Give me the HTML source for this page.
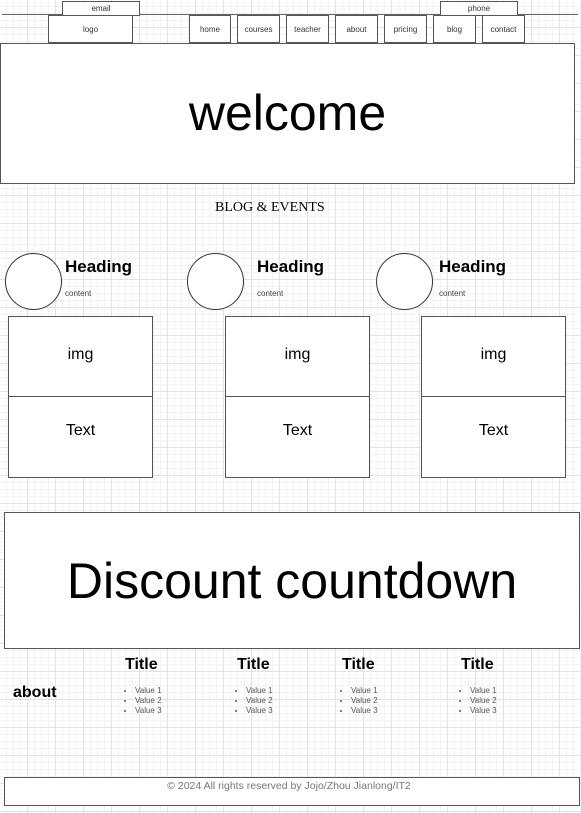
<!DOCTYPE html>
<html><head><meta charset="utf-8"><style>
body{margin:0;width:581px;height:813px;position:relative;overflow:hidden;font-family:"Liberation Sans",sans-serif;background-color:#fff;
background-image:linear-gradient(#e2e2e2 1px,transparent 1px),linear-gradient(90deg,#e2e2e2 1px,transparent 1px),linear-gradient(#f3f3f3 1px,transparent 1px),linear-gradient(90deg,#f3f3f3 1px,transparent 1px);
background-size:28px 28px,28px 28px,7px 7px,7px 7px;background-position:-1px -1px;}
.b{position:absolute;border:1px solid #555;background:#fff;box-sizing:border-box;display:flex;align-items:center;justify-content:center;color:#333}
.s{font-size:8px}
.a{position:absolute}
.c{position:absolute;border:1px solid #333;border-radius:50%;width:57px;height:57px;box-sizing:border-box;background:#fff}
.h{position:absolute;font-size:17px;font-weight:bold;color:#000}
.t{position:absolute;font-size:8px;color:#444}
ul{position:absolute;margin:0;padding-left:10px;font-size:8px;color:#555;line-height:10px}
.ti{position:absolute;font-size:16px;font-weight:bold}
</style></head><body>
<div class="a" style="left:2px;top:14px;width:576px;border-top:1px solid #666"></div>
<div class="b s" style="left:62px;top:1px;width:78px;height:15px">email</div>
<div class="b s" style="left:440px;top:1px;width:78px;height:15px">phone</div>
<div class="b s" style="left:48px;top:15px;width:85px;height:28px">logo</div>
<div class="b s" style="left:189px;top:15px;width:42px;height:28px">home</div>
<div class="b s" style="left:237px;top:15px;width:43px;height:28px">courses</div>
<div class="b s" style="left:286px;top:15px;width:43px;height:28px">teacher</div>
<div class="b s" style="left:335px;top:15px;width:43px;height:28px">about</div>
<div class="b s" style="left:384px;top:15px;width:43px;height:28px">pricing</div>
<div class="b s" style="left:433px;top:15px;width:43px;height:28px">blog</div>
<div class="b s" style="left:482px;top:15px;width:43px;height:28px">contact</div>
<div class="b" style="left:0;top:43px;width:575px;height:141px;font-size:50px;color:#000;padding-bottom:2px">welcome</div>
<div class="a" style="left:215px;top:200px;font-family:'Liberation Serif',serif;font-size:14px">BLOG &amp; EVENTS</div>

<div class="c" style="left:5px;top:253px"></div><div class="h" style="left:65px;top:257px">Heading</div><div class="t" style="left:65px;top:289px">content</div>
<div class="c" style="left:187px;top:253px"></div><div class="h" style="left:257px;top:257px">Heading</div><div class="t" style="left:257px;top:289px">content</div>
<div class="c" style="left:376px;top:253px"></div><div class="h" style="left:439px;top:257px">Heading</div><div class="t" style="left:439px;top:289px">content</div>

<div class="b" style="left:8px;top:316px;width:145px;height:81px;font-size:16px;color:#000;padding-bottom:3px">img</div>
<div class="b" style="left:8px;top:396px;width:145px;height:82px;font-size:16px;color:#000;padding-bottom:12px">Text</div>
<div class="b" style="left:225px;top:316px;width:145px;height:81px;font-size:16px;color:#000;padding-bottom:3px">img</div>
<div class="b" style="left:225px;top:396px;width:145px;height:82px;font-size:16px;color:#000;padding-bottom:12px">Text</div>
<div class="b" style="left:421px;top:316px;width:145px;height:81px;font-size:16px;color:#000;padding-bottom:3px">img</div>
<div class="b" style="left:421px;top:396px;width:145px;height:82px;font-size:16px;color:#000;padding-bottom:12px">Text</div>

<div class="b" style="left:4px;top:512px;width:576px;height:137px;font-size:50px;color:#000">Discount countdown</div>

<div class="ti" style="left:13px;top:684px">about</div>
<div class="ti" style="left:125px;top:656px">Title</div><ul style="left:125px;top:686px"><li>Value 1</li><li>Value 2</li><li>Value 3</li></ul>
<div class="ti" style="left:237px;top:656px">Title</div><ul style="left:236px;top:686px"><li>Value 1</li><li>Value 2</li><li>Value 3</li></ul>
<div class="ti" style="left:342px;top:656px">Title</div><ul style="left:341px;top:686px"><li>Value 1</li><li>Value 2</li><li>Value 3</li></ul>
<div class="ti" style="left:461px;top:656px">Title</div><ul style="left:460px;top:686px"><li>Value 1</li><li>Value 2</li><li>Value 3</li></ul>

<div class="b" style="left:4px;top:777px;width:576px;height:29px;align-items:flex-start;font-size:10.5px;color:#777;padding-top:2px;padding-right:6px">© 2024 All rights reserved by Jojo/Zhou Jianlong/IT2</div>
</body></html>
